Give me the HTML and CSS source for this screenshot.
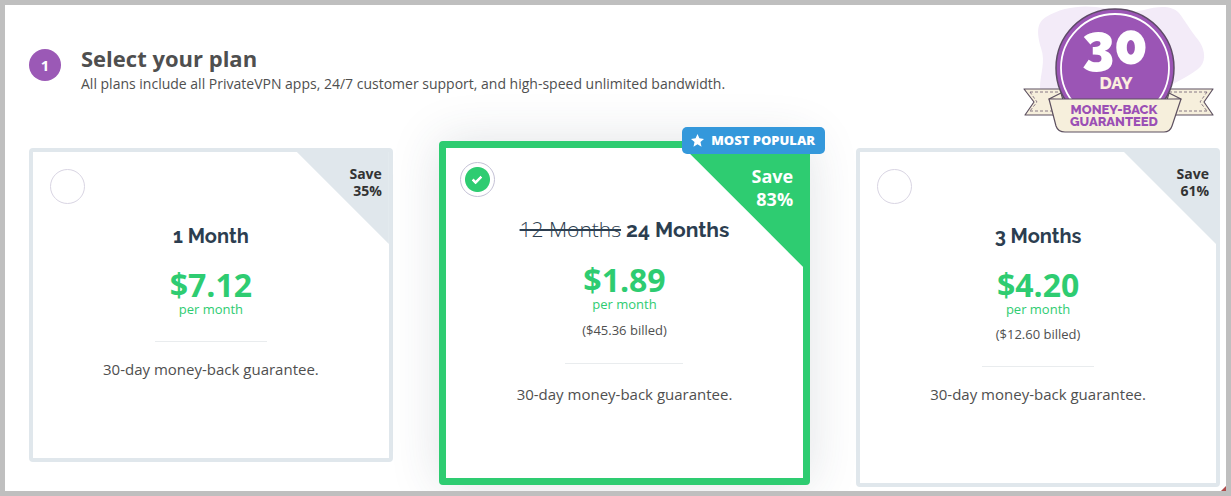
FILE: index.html
```html
<!DOCTYPE html>
<html lang="en">
<head>
  <meta charset="UTF-8" />
  <meta name="viewport" content="width=device-width, initial-scale=1.0" />
  <title>PrivateVPN - Select your plan</title>
  <link rel="stylesheet" href="styles.css">
</head>
<body>
  <main class="page">
    <header class="step-header">
      <span class="step-number">1</span>
      <div class="step-text">
        <h1>Select your plan</h1>
        <p>All plans include all PrivateVPN apps, 24/7 customer support, and high-speed unlimited bandwidth.</p>
      </div>
      <svg class="seal" viewBox="0 5 216 143" role="img" aria-label="30 day money-back guaranteed">
        <path class="seal-blob" d="M30 88 C30 74 36 62 31 48 C27 34 26 23 36 17 C50 8 69 5 86 7 C108 10 120 13 134 10 C148 6 162 5 169 13 C176 22 180 30 189 41 C196 51 196 63 188 69 C180 75 172 79 163 84 L150 95 L32 95 Z" />
        <path class="seal-ribbon" d="M14 89 H56 V115 H15 L24 102 Z" />
        <path class="seal-ribbon" d="M203 89 H155 V115 H203 L194 102 Z" />
        <path class="seal-stitch" d="M20 92 H54 M20 111 H44 M20 92 L27 102 L20 111 M197 92 H158 M197 111 H166 M197 92 L190 102 L197 111" />
        <circle class="seal-disc" cx="105" cy="68" r="59" />
        <circle class="seal-ring" cx="105" cy="68" r="54" />
        <path class="seal-ribbon" d="M51 93 L39 99 L53 100 Z M159 93 L171 99 L157 100 Z" />
        <path class="seal-ribbon" d="M39 99 H171 L162 126 Q160 132 154 132 H55 Q48 132 46 126 Z" />
        <text class="seal-digit" x="105" y="64">30</text>
        <text class="seal-day" x="106" y="89">DAY</text>
        <text class="seal-label" x="104" y="114">MONEY-BACK</text>
        <text class="seal-label" x="104" y="126">GUARANTEED</text>
      </svg>
    </header>

    <form class="plans">
      <label class="plan">
        <input type="radio" name="plan" value="1">
        <span class="save">Save<br>35%</span>
        <span class="title">1 Month</span>
        <span class="price">$7.12</span>
        <span class="period">per month</span>
        <span class="divider"></span>
        <span class="guarantee">30-day money-back guarantee.</span>
      </label>

      <label class="plan featured">
        <input type="radio" name="plan" value="24" checked>
        <span class="save">Save<br>83%</span>
        <span class="popular">
          <svg viewBox="0 0 24 24" aria-hidden="true"><path d="M12 0 L15.5 8 L24 9 L17.5 14.8 L19.4 23.4 L12 19 L4.6 23.4 L6.5 14.8 L0 9 L8.5 8 Z" /></svg>
          MOST POPULAR
        </span>
        <span class="title"><s>12 Months</s> 24 Months</span>
        <span class="price">$1.89</span>
        <span class="period">per month</span>
        <span class="billed">($45.36 billed)</span>
        <span class="divider"></span>
        <span class="guarantee">30-day money-back guarantee.</span>
      </label>

      <label class="plan">
        <input type="radio" name="plan" value="3">
        <span class="save">Save<br>61%</span>
        <span class="title">3 Months</span>
        <span class="price">$4.20</span>
        <span class="period">per month</span>
        <span class="billed">($12.60 billed)</span>
        <span class="divider"></span>
        <span class="guarantee">30-day money-back guarantee.</span>
      </label>
    </form>
  </main>
</body>
</html>
```
FILE: styles.css
```css
* {
  margin: 0;
  padding: 0;
  box-sizing: border-box;
}

body {
  font-family: "Open Sans", Arial, sans-serif;
  background-color: #fff;
  color: #4f4f4f;
}

.page {
  position: relative;
  min-height: 100vh;
  border: 5px solid #bfbfbf;
  overflow: hidden;
}

/* red corner mark */
.page::after {
  content: "";
  position: absolute;
  right: 0;
  bottom: 0;
  border-left: 5px solid transparent;
  border-bottom: 5px solid #b04a4a;
}

.step-header {
  display: flex;
  align-items: flex-start;
  padding-left: 24px;
}

.step-number {
  flex: none;
  width: 32px;
  height: 32px;
  margin: 44px 20px 0 0;
  border-radius: 50%;
  background-color: #9b59b6;
  color: #fff;
  font-size: 15px;
  font-weight: bold;
  line-height: 32px;
  text-align: center;
}

.step-text {
  flex: 1;
  padding-top: 39px;
}

.step-text h1 {
  font-size: 22px;
  line-height: 28px;
}

.step-text p {
  font-size: 14px;
  line-height: 24px;
}

.seal {
  flex: none;
  width: 216px;
  height: 143px;
}

.seal-blob {
  fill: #f3ebf8;
}

.seal-ribbon {
  fill: #f6efdc;
  stroke: #5d5060;
  stroke-width: 1.2;
  stroke-linejoin: round;
}

.seal-stitch {
  fill: none;
  stroke: #6d5b70;
  stroke-width: 0.8;
  stroke-dasharray: 3 2;
}

.seal-disc {
  fill: #9b55b5;
  stroke: #5d4a66;
  stroke-width: 1.5;
}

.seal-ring {
  fill: none;
  stroke: #fff;
  stroke-width: 1.8;
}

.seal text {
  font-family: Raleway, Lato, sans-serif;
  font-weight: 800;
  text-anchor: middle;
}

.seal .seal-digit {
  fill: #fff;
  font-size: 55px;
  font-weight: 900;
}

.seal-day {
  fill: #fbeedd;
  font-size: 17px;
}

.seal-label {
  fill: #9b4fb5;
  font-size: 13px;
}

.plans {
  display: grid;
  grid-template-columns: 49fr 50fr 49fr;
  gap: 46px;
  align-items: start;
  padding: 0 6px 4px 24px;
}

.plan {
  position: relative;
  display: flex;
  flex-direction: column;
  align-items: center;
  padding: 17px 17px 78px;
  border: 4px solid #e0e7ec;
  border-radius: 4px;
  background-color: #fff;
  text-align: center;
  cursor: pointer;
}

.plan input {
  appearance: none;
  align-self: flex-start;
  display: grid;
  place-items: center;
  width: 35px;
  height: 35px;
  margin-bottom: 18px;
  border: 1px solid #d9d5e3;
  border-radius: 50%;
  cursor: pointer;
}

.plan input:checked {
  border-color: #c5c2d6;
  background: radial-gradient(circle, #2ecc71 12px, transparent 13px);
}

/* tick inside the selected radio */
.plan input:checked::before {
  content: "";
  width: 7px;
  height: 3px;
  margin-bottom: 2px;
  border-left: 3px solid #fff;
  border-bottom: 3px solid #fff;
  border-radius: 1px;
  transform: rotate(-45deg);
}

.save {
  position: absolute;
  top: 0;
  right: 0;
  width: 92px;
  height: 92px;
  padding: 13px 7px 0 0;
  background-color: #e0e7ec;
  clip-path: polygon(0 0, 100% 0, 100% 100%);
  color: #333;
  font-size: 14px;
  font-weight: bold;
  line-height: 17px;
  text-align: right;
}

.title {
  color: #2c3e50;
  font-family: Raleway, Lato, sans-serif;
  font-size: 20px;
  font-weight: bold;
  line-height: 28px;
}

.title s {
  font-family: "Open Sans", Arial, sans-serif;
  font-weight: 300;
}

.price {
  margin-top: 20px;
  color: #2ecc71;
  font-size: 32px;
  font-weight: bold;
  line-height: 30px;
}

.period {
  color: #2ecc71;
  font-size: 13px;
  line-height: 18px;
}

.billed {
  margin-top: 7px;
  font-size: 13px;
  line-height: 18px;
}

.divider {
  width: 112px;
  height: 1px;
  margin: 23px 0 16px;
  background-color: #e9ecee;
}

.guarantee {
  font-size: 15px;
  line-height: 22px;
}

.featured {
  margin-top: -7px;
  padding: 14px 14px 73px;
  border: 7px solid #2ecc71;
  border-radius: 4px;
  box-shadow: 0 0 50px rgba(44, 62, 80, 0.15);
}

.featured input {
  margin-bottom: 17px;
}

.featured .title {
  font-size: 21px;
  line-height: 30px;
}

.featured .billed {
  margin-top: 8px;
}

.featured .divider {
  width: 118px;
  margin: 24px 0 19px;
}

.featured .save {
  width: 119px;
  height: 119px;
  padding: 17px 10px 0 0;
  background-color: #2ecc71;
  color: #fff;
  font-size: 18px;
  line-height: 23px;
}

.popular {
  position: absolute;
  top: -21px;
  right: -22px;
  display: flex;
  align-items: center;
  gap: 7px;
  padding: 0 10px 0 9px;
  border-radius: 5px;
  background-color: #3498db;
  color: #fff;
  font-size: 13px;
  font-weight: 800;
  line-height: 27px;
}

.popular svg {
  width: 13px;
  height: 13px;
  fill: #fff;
}
```
